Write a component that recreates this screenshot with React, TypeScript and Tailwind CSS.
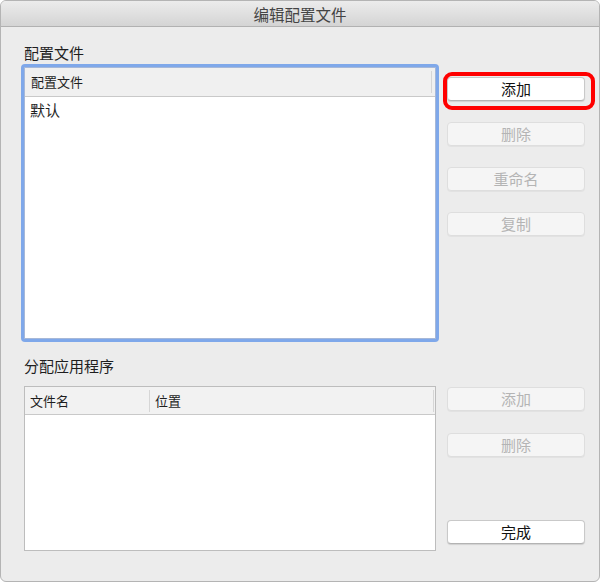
import React from 'react';

interface BtnProps {
  label: string;
  disabled?: boolean;
}

function Btn({ label, disabled }: BtnProps) {
  if (disabled) {
    return (
      <button
        disabled
        className="w-[138px] h-[24px] rounded-[4px] border border-[#dedede] bg-[#f5f5f5] text-[15px] leading-[22px] text-[#b4b4b4] shadow-[0_1px_0_rgba(0,0,0,0.04)]"
      >
        {label}
      </button>
    );
  }
  return (
    <button className="w-[138px] h-[24px] rounded-[4px] border border-[#c9c9c9] border-b-[#b3b3b3] bg-white text-[15px] leading-[22px] text-[#111] shadow-[0_1px_1px_rgba(0,0,0,0.12)]">
      {label}
    </button>
  );
}

export default function App() {
  return (
    <div className="w-[600px] h-[582px] bg-white font-['Noto_Sans_CJK_SC',sans-serif]">
      <div className="relative w-[600px] h-[582px] flex flex-col overflow-hidden rounded-[6px] border border-[#b4b4b4] bg-[#ececec]">
        {/* title bar */}
        <div className="h-[26px] shrink-0 border-b border-[#b1b1b1] bg-gradient-to-b from-[#ececec] to-[#d4d4d4] flex items-center justify-center">
          <span className="text-[15.5px] leading-[20px] text-[#444] mt-[1px]">编辑配置文件</span>
        </div>

        <div className="pl-[20px] pr-[14px]">
          {/* profiles */}
          <div className="flex gap-[8px]">
            <div className="w-[419px] flex flex-col">
              <div className="mt-[16px] mb-[1px] pl-[3px] text-[15px] leading-[20px] text-[#1e1e1e]">配置文件</div>
              <div className="h-[278px] rounded-[4px] bg-[#7fa8ea] p-[3px]">
                <div className="h-full flex flex-col border border-[#a6b8d8] bg-white">
                  <div className="h-[29px] shrink-0 flex items-center border-b border-[#c9c9c9] bg-[#f0f0f0]">
                    <span className="flex-1 pl-[6px] text-[13px] leading-[18px] text-[#1e1e1e]">配置文件</span>
                    <span className="w-[1px] h-[22px] bg-[#d6d6d6] mr-[3px]" />
                  </div>
                  <div className="pl-[5px] pt-[3px] text-[15px] leading-[20px] text-[#1e1e1e]">默认</div>
                </div>
              </div>
            </div>
            <div className="flex flex-col gap-[21px] pt-[50px]">
              <Btn label="添加" />
              <Btn label="删除" disabled />
              <Btn label="重命名" disabled />
              <Btn label="复制" disabled />
            </div>
          </div>

          {/* applications */}
          <div className="mt-[14px] pl-[3px] text-[15px] leading-[20px] text-[#1e1e1e]">分配应用程序</div>
          <div className="mt-[10px] flex gap-[11px] pl-[3px]">
            <div className="w-[413px] h-[165px] flex flex-col border border-[#bdbdbd] bg-white">
              <div className="h-[28px] shrink-0 flex items-center border-b border-[#c9c9c9] bg-[#f2f2f2]">
                <span className="w-[124px] pl-[5px] text-[13px] leading-[18px] text-[#1e1e1e]">文件名</span>
                <span className="w-[1px] h-[22px] bg-[#d6d6d6]" />
                <span className="flex-1 pl-[5px] text-[13px] leading-[18px] text-[#1e1e1e]">位置</span>
                <span className="w-[1px] h-[22px] bg-[#d6d6d6] mr-[1px]" />
              </div>
            </div>
            <div className="flex flex-col pt-[1px]">
              <Btn label="添加" disabled />
              <div className="mt-[21px]">
                <Btn label="删除" disabled />
              </div>
              <div className="mt-[62px]">
                <Btn label="完成" />
              </div>
            </div>
          </div>
        </div>

        {/* highlight marker */}
        <div className="absolute left-[442px] top-[71px] w-[152px] h-[38px] rounded-[9px] border-[4px] border-[#ff0000]" />
      </div>
    </div>
  );
}
